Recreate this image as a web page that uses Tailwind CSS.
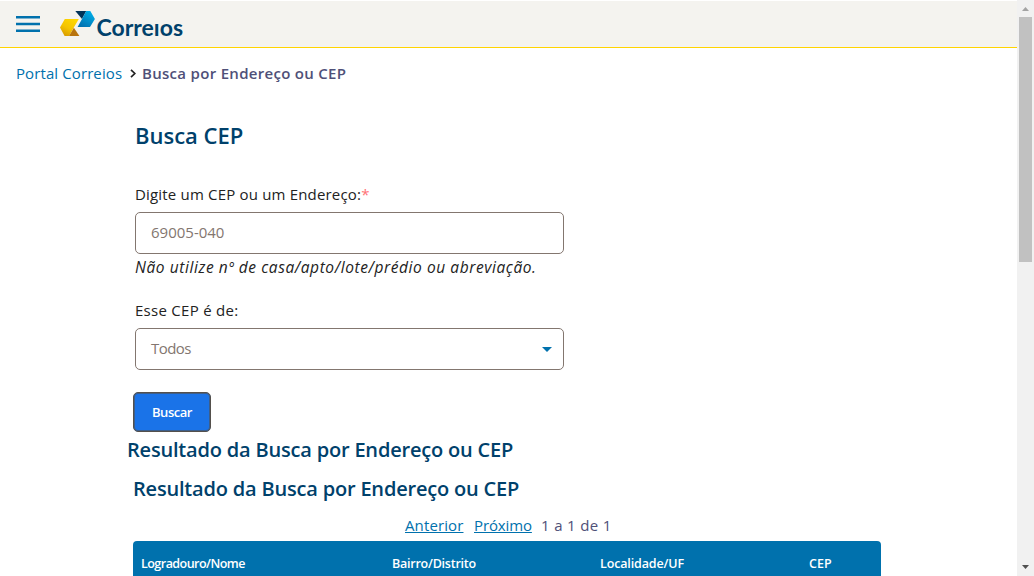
<!DOCTYPE html>
<html lang="pt-BR">
<head>
<meta charset="utf-8">
<title>Busca CEP</title>
<script src="https://cdn.jsdelivr.net/npm/@tailwindcss/browser@4"></script>
</head>
<body class="h-[576px] overflow-hidden bg-white flex font-['Trebuchet_MS','Open_Sans',sans-serif] text-base text-[#222]">
<div class="w-[1017px] h-full flex flex-col overflow-hidden">
  <header class="h-12 shrink-0 border-t border-t-white border-b border-b-[#ffd400] bg-[#f4f3ef] flex items-start pl-4">
    <button class="mt-[15px] w-6 h-4" aria-label="Menu">
      <svg class="block w-6 h-4" viewBox="0 0 24 16" fill="#0071ad"><path d="M0 0H24V2.6H0ZM0 6.7H24V9.3H0ZM0 13.4H24V16H0Z"/></svg>
    </button>
    <svg class="ml-[20px] mt-[9px] w-[126px] h-[30px]" viewBox="60 10 126 30">
      <defs>
        <linearGradient id="sky" x1="0.2" y1="1" x2="0.8" y2="0"><stop offset="0" stop-color="#006fae"/><stop offset="1" stop-color="#00b0ea"/></linearGradient>
        <linearGradient id="gold" x1="0.8" y1="0" x2="0.2" y2="1"><stop offset="0" stop-color="#ffd800"/><stop offset="0.55" stop-color="#f5c400"/><stop offset="1" stop-color="#d79a00"/></linearGradient>
      </defs>
      <path d="M75.3 11H86.2L82 19Z" fill="#003358"/>
      <path d="M86.2 11H90.3L94.9 19L90 27H77.6L82 19Z" fill="url(#sky)"/>
      <path d="M64.8 19H78.8L73.8 27.5L69 36H64.6L60 27.5Z" fill="url(#gold)"/>
      <path d="M73.9 27.8L79.4 36H69Z" fill="#b8740e"/>
      <text x="96.5" y="35.7" font-family="Lato" font-weight="700" font-size="22.5" textLength="86.5" lengthAdjust="spacingAndGlyphs" fill="#00416b">Correıos</text>
    </svg>
  </header>
  <nav class="h-[50px] shrink-0 pl-4 flex items-center leading-6">
    <a class="w-[107px] text-[15px] tracking-[0.1px] text-[#0071ad] whitespace-nowrap">Portal Correios</a>
    <svg class="mt-px ml-[7px] mr-[6px] w-[6px] h-[9px]" viewBox="0 0 6 9" fill="none" stroke="#222" stroke-width="1.7"><path d="M1 .8L4.8 4.5L1 8.2"/></svg>
    <span class="text-[15px] font-semibold tracking-[0.3px] text-[#4f5078] whitespace-nowrap">Busca por Endereço ou CEP</span>
  </nav>
  <main class="pl-[127px] flex flex-col">
    <div class="pl-2 flex flex-col w-[437px]">
      <h1 class="mt-[21px] h-8 leading-8 text-[22px] font-semibold text-[#00416b] whitespace-nowrap">Busca CEP</h1>
      <label class="mt-[31px] h-6 leading-6 text-[15px] tracking-[0.18px] whitespace-nowrap">Digite um CEP ou um Endereço:<span class="text-[#ff7276] tracking-[-1px]">*</span></label>
      <div class="mt-[6px] h-[42px] border border-[#83766f] rounded-[5px] px-[15px] pb-[2px] flex items-center text-[15px] text-[#83766f]">69005-040</div>
      <em class="mt-px h-6 leading-6 text-[15.5px] tracking-[0.58px] whitespace-nowrap">Não utilize nº de casa/apto/lote/prédio ou abreviação.</em>
      <label class="mt-[19px] h-6 leading-6 text-[15px] tracking-[0.28px]">Esse CEP é de:</label>
      <div class="mt-[6px] h-[42px] border border-[#83766f] rounded-[5px] pl-[15px] pr-[11px] flex items-center justify-between text-[15px] text-[#83766f]"><span class="tracking-[-0.55px] pb-[2px]">Todos</span>
        <svg class="w-[10px] h-[5px]" viewBox="0 0 10 5"><path d="M0 0H10L5 5Z" fill="#0071ad"/></svg>
      </div>
    </div>
    <button class="ml-[6px] mt-[22px] w-[78px] h-10 shrink-0 border-[1.5px] border-[#54504c] ring-1 ring-inset ring-[#54504c]/60 rounded-[5px] bg-[#1a73e8] text-white text-[13px] tracking-[-0.45px] font-semibold pt-[2px]">Buscar</button>
    <h2 class="mt-[2px] h-8 leading-8 text-[20px] font-semibold tracking-[-0.19px] text-[#00416b] whitespace-nowrap">Resultado da Busca por Endereço ou CEP</h2>
    <h2 class="ml-[6px] mt-[7px] h-8 leading-8 text-[20px] font-semibold tracking-[-0.19px] text-[#00416b] whitespace-nowrap">Resultado da Busca por Endereço ou CEP</h2>
    <div class="ml-[278px] mt-[8px] h-6 leading-6 flex text-[15px] text-[#4f5078] whitespace-nowrap">
      <a class="w-[69px] text-[#0071ad]"><span class="underline tracking-[0.12px]">Anterior</span></a>
      <a class="w-[67px] text-[#0071ad]"><span class="underline tracking-[-0.12px]">Próximo</span></a>
      <span class="tracking-[0.35px]">1 a 1 de 1</span>
    </div>
    <div class="ml-[6px] mt-[4px] w-[748px] h-[50px] shrink-0 bg-[#0071ad] rounded-t-[4px] pl-2 pt-[13px] leading-5 flex text-[12.5px] font-semibold text-white">
      <span class="w-[251px] tracking-[-0.53px]">Logradouro/Nome</span><span class="w-[208px] tracking-[-0.23px]">Bairro/Distrito</span><span class="w-[209px] tracking-[-0.13px]">Localidade/UF</span><span>CEP</span>
    </div>
  </main>
</div>
<div class="w-[17px] h-full bg-[#f1f1f1] flex flex-col items-center justify-between">
  <div class="flex flex-col items-center">
    <svg class="mt-[7px] mb-[6px] w-[7px] h-[4px]" viewBox="0 0 7 4"><path d="M0 4L3.5 0L7 4Z" fill="#a3a3a3"/></svg>
    <div class="w-[13px] h-[245px] bg-[#c1c1c1]"></div>
  </div>
  <svg class="mb-[7px] w-[7px] h-[4px]" viewBox="0 0 7 4"><path d="M0 0H7L3.5 4Z" fill="#505050"/></svg>
</div>
</body>
</html>
